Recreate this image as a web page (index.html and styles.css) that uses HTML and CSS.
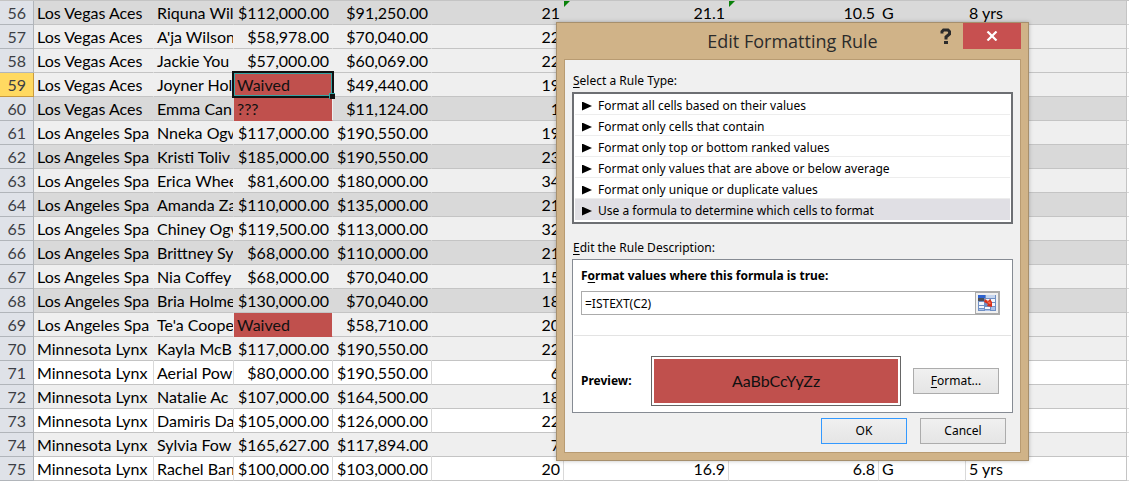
FILE: index.html
```html
<!DOCTYPE html>
<html lang="en">
<head>
<meta charset="utf-8">
<title>Edit Formatting Rule</title>
<link rel="stylesheet" href="styles.css">
</head>
<body>
<main class="workspace">
<table class="sheet">
<colgroup><col class="c-row"><col class="c-team"><col class="c-name"><col class="c-pay"><col class="c-pay"><col class="c-age"><col class="c-min"><col class="c-pts"><col class="c-pos"><col class="c-yrs"><col></colgroup>
<tbody>
<tr class="dark"><th scope="row">56</th><td>Los Vegas Aces</td><td>Riquna Wil</td><td class="num">$112,000.00</td><td class="num">$91,250.00</td><td class="num">21</td><td class="num flag">21.1</td><td class="num flag">10.5</td><td>G</td><td>8 yrs</td><td></td></tr>
<tr class="light"><th scope="row">57</th><td>Los Vegas Aces</td><td>A'ja Wilson</td><td class="num">$58,978.00</td><td class="num">$70,040.00</td><td class="num">22</td><td></td><td></td><td></td><td></td><td></td></tr>
<tr class="light"><th scope="row">58</th><td>Los Vegas Aces</td><td>Jackie You</td><td class="num">$57,000.00</td><td class="num">$60,069.00</td><td class="num">22</td><td></td><td></td><td></td><td></td><td></td></tr>
<tr class="light active"><th scope="row">59</th><td>Los Vegas Aces</td><td>Joyner Hol</td><td class="hit selected">Waived</td><td class="num">$49,440.00</td><td class="num">19</td><td></td><td></td><td></td><td></td><td></td></tr>
<tr class="dark"><th scope="row">60</th><td>Los Vegas Aces</td><td>Emma Can</td><td class="hit">???</td><td class="num">$11,124.00</td><td class="num">1</td><td></td><td></td><td></td><td></td><td></td></tr>
<tr class="light"><th scope="row">61</th><td>Los Angeles Spa</td><td>Nneka Ogw</td><td class="num">$117,000.00</td><td class="num">$190,550.00</td><td class="num">19</td><td></td><td></td><td></td><td></td><td></td></tr>
<tr class="dark"><th scope="row">62</th><td>Los Angeles Spa</td><td>Kristi Toliv</td><td class="num">$185,000.00</td><td class="num">$190,550.00</td><td class="num">23</td><td></td><td></td><td></td><td></td><td></td></tr>
<tr class="light"><th scope="row">63</th><td>Los Angeles Spa</td><td>Erica Whee</td><td class="num">$81,600.00</td><td class="num">$180,000.00</td><td class="num">34</td><td></td><td></td><td></td><td></td><td></td></tr>
<tr class="dark"><th scope="row">64</th><td>Los Angeles Spa</td><td>Amanda Za</td><td class="num">$110,000.00</td><td class="num">$135,000.00</td><td class="num">21</td><td></td><td></td><td></td><td></td><td></td></tr>
<tr class="light"><th scope="row">65</th><td>Los Angeles Spa</td><td>Chiney Ogw</td><td class="num">$119,500.00</td><td class="num">$113,000.00</td><td class="num">32</td><td></td><td></td><td></td><td></td><td></td></tr>
<tr class="dark"><th scope="row">66</th><td>Los Angeles Spa</td><td>Brittney Sy</td><td class="num">$68,000.00</td><td class="num">$110,000.00</td><td class="num">21</td><td></td><td></td><td></td><td></td><td></td></tr>
<tr class="light"><th scope="row">67</th><td>Los Angeles Spa</td><td>Nia Coffey</td><td class="num">$68,000.00</td><td class="num">$70,040.00</td><td class="num">15</td><td></td><td></td><td></td><td></td><td></td></tr>
<tr class="dark"><th scope="row">68</th><td>Los Angeles Spa</td><td>Bria Holme</td><td class="num">$130,000.00</td><td class="num">$70,040.00</td><td class="num">18</td><td></td><td></td><td></td><td></td><td></td></tr>
<tr class="light"><th scope="row">69</th><td>Los Angeles Spa</td><td>Te'a Coope</td><td class="hit">Waived</td><td class="num">$58,710.00</td><td class="num">20</td><td></td><td></td><td></td><td></td><td></td></tr>
<tr class="light"><th scope="row">70</th><td>Minnesota Lynx</td><td>Kayla McB</td><td class="num">$117,000.00</td><td class="num">$190,550.00</td><td class="num">22</td><td></td><td></td><td></td><td></td><td></td></tr>
<tr class="plain"><th scope="row">71</th><td>Minnesota Lynx</td><td>Aerial Pow</td><td class="num">$80,000.00</td><td class="num">$190,550.00</td><td class="num">6</td><td></td><td></td><td></td><td></td><td></td></tr>
<tr class="light"><th scope="row">72</th><td>Minnesota Lynx</td><td>Natalie Ac</td><td class="num">$107,000.00</td><td class="num">$164,500.00</td><td class="num">18</td><td></td><td></td><td></td><td></td><td></td></tr>
<tr class="plain"><th scope="row">73</th><td>Minnesota Lynx</td><td>Damiris Da</td><td class="num">$105,000.00</td><td class="num">$126,000.00</td><td class="num">22</td><td></td><td></td><td></td><td></td><td></td></tr>
<tr class="light"><th scope="row">74</th><td>Minnesota Lynx</td><td>Sylvia Fow</td><td class="num">$165,627.00</td><td class="num">$117,894.00</td><td class="num">7</td><td></td><td></td><td></td><td></td><td></td></tr>
<tr class="plain"><th scope="row">75</th><td>Minnesota Lynx</td><td>Rachel Ban</td><td class="num">$100,000.00</td><td class="num">$103,000.00</td><td class="num">20</td><td class="num">16.9</td><td class="num">6.8</td><td>G</td><td>5 yrs</td><td></td></tr>
</tbody>
</table>

<section class="dialog" role="dialog" aria-labelledby="dialog-title">
  <header class="titlebar">
    <h1 id="dialog-title">Edit Formatting Rule</h1>
    <div class="window-buttons">
      <button class="help" type="button" aria-label="Help"><svg width="12" height="16" viewBox="0 0 12 16"><path d="M2 5.500V3.500L3.500 2H8L9.500 3.500V6L6 9V11.500" fill="none" stroke="#2b2b2b" stroke-width="3"/><path d="M4 13h4v3H4z" fill="#2b2b2b"/></svg></button>
      <button class="close" type="button" aria-label="Close"><svg width="12" height="10" viewBox="0 0 12 10"><path d="M1.500 .5 10.500 9.500M10.500 .5 1.500 9.500" stroke="#fff" stroke-width="2.200"/></svg></button>
    </div>
  </header>
  <form class="client">
    <h2 class="caption" id="type-label"><u>S</u>elect a Rule Type:</h2>
    <div class="rules" role="radiogroup" aria-labelledby="type-label">
      <label><input type="radio" name="rule">Format all cells based on their values</label>
      <label><input type="radio" name="rule">Format only cells that contain</label>
      <label><input type="radio" name="rule">Format only top or bottom ranked values</label>
      <label><input type="radio" name="rule">Format only values that are above or below average</label>
      <label><input type="radio" name="rule">Format only unique or duplicate values</label>
      <label><input type="radio" name="rule" checked>Use a formula to determine which cells to format</label>
    </div>
    <h2 class="caption"><u>E</u>dit the Rule Description:</h2>
    <div class="description">
      <div class="formula">
        <label for="formula">F<u>o</u>rmat values where this formula is true:</label>
        <div class="formula-field">
          <input id="formula" type="text" value="=ISTEXT(C2)">
          <button type="button" aria-label="Pick range"><svg width="18" height="16" viewBox="0 0 18 16"><path d="M0 0h18v16H0z" fill="#6f8fc4"/><path d="M0 0h7v3H0z" fill="#2e62d0"/><path d="M8 0h9v3H8z" fill="#c5d5ee"/><path d="M0 3h6v3H0z" fill="#4c4f58"/><path d="M1 7h5v3H1zM1 11h5v2H1zM7 12h5v2H7zM13 8h4v3h-4zM13 4h4v3h-4zM7 4h5v3H7z" fill="#f2f6fd"/><path d="M1 14h5v1H1zM7 15h5v1H7zM13 12h4v3h-4z" fill="#a9c0e8"/><path d="M7 4 10 6 12 4 14 7 14 12 9 11 10 9 6 7z" fill="#d9301a"/><path d="M8 5 11 7 12 6 13 9 11 9z" fill="#f0694a"/></svg></button>
        </div>
      </div>
      <div class="preview-row">
        <span class="preview-label">Preview:</span>
        <div class="preview"><div class="swatch">AaBbCcYyZz</div></div>
        <button class="btn" type="button"><span><u>F</u>ormat...</span></button>
      </div>
    </div>
    <footer class="actions">
      <button class="btn default" type="button">OK</button>
      <button class="btn" type="button">Cancel</button>
    </footer>
  </form>
</section>
</main>
</body>
</html>
```
FILE: styles.css
```css
* { box-sizing: border-box; }
body { margin: 0; background: #fff; overflow: hidden; }
.workspace { position: relative; }

.sheet {
  width: 100%;
  table-layout: fixed;
  border-collapse: separate;
  border-spacing: 0;
  border-top: 1px solid #c4c4c4;
  font: 16px/23px Lato, "Liberation Sans", sans-serif;
  color: #000;
}
.c-row { width: 34px; }
.c-team { width: 120px; }
.c-name { width: 80px; }
.c-pay { width: 99px; }
.c-age { width: 132px; }
.c-min { width: 165px; }
.c-pts { width: 150px; }
.c-pos { width: 87px; }
.c-yrs { width: 161px; }
.sheet th, .sheet td {
  height: 24px;
  padding: 0 3px;
  border-bottom: 1px solid #c4c4c4;
  overflow: hidden;
  white-space: nowrap;
  text-align: left;
}
.sheet th {
  padding: 0 7px;
  background: #dfe2e8;
  border-right: 1px solid #b1b5ba;
  border-bottom-color: #b1b5ba;
  color: #3c3f45;
  font-weight: 400;
  text-align: right;
}
.sheet td.num { padding: 0 3px 0 0; text-align: right; }
.dark td { background: #d9d9d9; border-right: 1px solid #d9d9d9; }
.light td { background: #efefef; border-right: 1px solid #efefef; }
.plain td { border-right: 1px solid #d9d9d9; }
.sheet td:nth-child(10) { border-right: 1px solid #c4c4c4; }
.sheet td:last-child { background: #fff; border-right: 0; border-bottom-color: #d9d9d9; }
.active th { background: #ffd961; border-color: #c99a3e; }
.sheet td.hit { background: #c0504d; color: #111; border-right: 1px solid #efefef; border-bottom-color: #c0504d; }
.flag { position: relative; }
.flag::before {
  content: "";
  position: absolute;
  left: 0;
  top: 0;
  border-top: 6px solid #0a820a;
  border-right: 6px solid transparent;
}
.sheet td.selected { position: relative; overflow: visible; border-bottom-color: #111; }
.selected::before {
  content: "";
  position: absolute;
  inset: -2px -2px -2px -2px;
  border: 2px solid #111;
  outline: 1px solid #36a3a3;
  outline-offset: -3px;
}
.selected::after {
  content: "";
  position: absolute;
  right: -3px;
  bottom: -3px;
  width: 5px;
  height: 5px;
  background: #111;
  border-top: 1px solid #36a3a3;
  border-left: 1px solid #36a3a3;
}

.dialog {
  position: absolute;
  left: 556px;
  top: 22px;
  width: 473px;
  padding: 0 7px 7px;
  background: #d0b388;
  border: 1px solid #a68f6d;
  box-shadow: 0 0 4px rgba(0, 0, 0, .25);
  font: 12px/16px "Noto Sans", "DejaVu Sans", sans-serif;
  color: #000;
}
.titlebar { position: relative; height: 36px; }
.titlebar h1 {
  margin: 0;
  font: 18px/37px "Open Sans", sans-serif;
  text-align: center;
  color: #2b2b2b;
}
.window-buttons { position: absolute; top: 0; right: 0; display: flex; align-items: flex-start; gap: 11px; }
.window-buttons button { display: grid; place-items: center; height: 26px; padding: 0; border: 0; background: none; }
.window-buttons .close { width: 58px; background: #c75050; }
.client {
  padding: 13px 7px 8px;
  background: #f0f0f0;
  border: 1px solid #b89b72;
}
.caption { margin: 0 0 3px; padding-left: 1px; font: inherit; }
u { text-underline-offset: 2px; }
.rules {
  display: flex;
  flex-direction: column;
  margin-bottom: 16px;
  padding: 0 1px 2px;
  background: #fff;
  border: 2px solid #6d6f73;
}
.rules label {
  display: flex;
  align-items: center;
  gap: 6px;
  height: 21px;
  padding: 4px 7px 0;
  border-bottom: 1px solid #ededed;
}
.rules input { appearance: none; width: 10px; height: 9px; margin: 0; background: #000; clip-path: polygon(0 0, 100% 50%, 0 100%); }
.rules label:has(:checked) { background: #e0dfe4; border-color: #e0dfe4; }
.description { background: #fff; border: 1px solid #868b93; padding: 0 1px; }
.formula { padding: 8px 11px 20px 7px; border-bottom: 1px solid #e3e3e3; }
.formula label, .preview-label { font-weight: 700; }
.formula-field { display: flex; margin-top: 7px; border: 1px solid #ababab; }
.formula-field input { flex: 1; min-width: 0; height: 22px; padding: 0 3px; border: 0; font: inherit; }
.formula-field button { display: grid; place-items: center; width: 24px; padding: 0; background: #f0f0f0; border: 1px solid #ababab; }
.preview-row { display: flex; align-items: center; padding: 20px 12px 6px 7px; }
.preview-label { width: 70px; }
.preview { flex: 1; margin-right: 12px; padding: 2px; border: 1px solid #666; }
.swatch { background: #c0504d; color: #111; font: 16px/44px Lato, sans-serif; text-align: center; height: 44px; }
.btn { width: 86px; height: 26px; padding: 0; border: 1px solid #acacac; background: linear-gradient(#f0f0f0, #e5e5e5); font: inherit; color: #000; }
.btn.default { border-color: #3399ff; }
.actions { display: flex; justify-content: flex-end; gap: 13px; padding: 5px 7px 0; }
```
